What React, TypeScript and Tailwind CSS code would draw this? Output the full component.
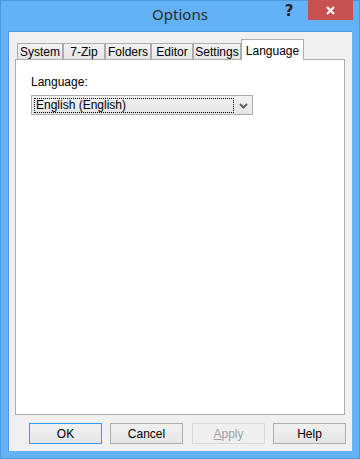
import React from "react";

const tabs = [
  { label: "System", w: "w-[46px]" },
  { label: "7-Zip", w: "w-[42px]" },
  { label: "Folders", w: "w-[46px]" },
  { label: "Editor", w: "w-[42px]" },
  { label: "Settings", w: "w-[48px]" },
];

function Chevron() {
  return (
    <svg width="9" height="6" viewBox="0 0 9 6">
      <path d="M1 1 L4.5 4.5 L8 1" fill="none" stroke="#5f5f5f" strokeWidth="2" />
    </svg>
  );
}

export default function App() {
  return (
    <div
      className="w-[360px] h-[459px] bg-[#63b1f6] border border-[#4d98dc] flex flex-col text-[12px] text-black"
      style={{ fontFamily: '"Liberation Sans", Arial, sans-serif' }}
    >
      {/* Title bar */}
      <div className="relative h-[30px] shrink-0 flex items-start">
        <div
          className="absolute left-0 right-0 top-[2px] text-center text-[15px] text-[#2b2b2b]"
          style={{ fontFamily: '"Noto Sans", "Open Sans", sans-serif' }}
        >
          Options
        </div>
        <div className="ml-auto flex items-start">
          <div
            className="w-[16px] h-[20px] mr-[11px] flex items-center justify-center text-[15px] font-bold text-[#222]"
            style={{ fontFamily: '"DejaVu Sans", sans-serif' }}
          >
            ?
          </div>
          <div className="w-[45px] h-[20px] -mt-px bg-[#c75050] flex items-center justify-center mr-[6px]">
            <svg width="9" height="9" viewBox="0 0 9 9">
              <path d="M1 1 L8 8 M8 1 L1 8" stroke="#fff" strokeWidth="2" />
            </svg>
          </div>
        </div>
      </div>

      {/* Client area */}
      <div className="mx-[7px] w-[344px] h-[420px] bg-[#f0f0f0] border-l border-t border-[#4d98dc] flex flex-col">
        <div className="pt-[7px] pl-[6px]">
          {/* Tab row */}
          <div className="h-[20px] flex items-end pl-[2px]">
            {tabs.map((t) => (
              <div
                key={t.label}
                className={`${t.w} h-[16px] border border-b-0 border-[#acacac] bg-gradient-to-b from-[#f2f2f2] to-[#e6e6e6] flex items-center justify-center`}
              >
                {t.label}
              </div>
            ))}
            <div className="relative z-10 w-[63px] h-[21px] -mb-px border border-b-0 border-[#acacac] bg-white flex items-start justify-center pt-[2px]">
              Language
            </div>
          </div>

          {/* Panel */}
          <div className="w-[330px] h-[356px] border border-[#acacac] bg-white pl-[15px] pt-[15px]">
            <div className="leading-[14px]">Language:</div>
            <div className="mt-[6px] w-[222px] h-[20px] border border-[#acacac] bg-gradient-to-b from-[#f2f2f2] to-[#e5e5e5] flex items-center">
              <div className="ml-[2px] w-[200px] h-[15px] border border-dotted border-black flex items-center pl-px">
                English (English)
              </div>
              <div className="flex-1 flex items-center justify-center pt-px">
                <Chevron />
              </div>
            </div>
          </div>
        </div>

        {/* Buttons */}
        <div className="mt-[8px] pl-[20px] flex gap-[8px]">
          <div className="w-[73px] h-[21px] border border-[#3399ff] bg-gradient-to-b from-[#f0f0f0] to-[#e5e5e5] flex items-center justify-center">
            OK
          </div>
          <div className="w-[73px] h-[21px] border border-[#acacac] bg-gradient-to-b from-[#f0f0f0] to-[#e5e5e5] flex items-center justify-center">
            Cancel
          </div>
          <div className="ml-px w-[73px] h-[21px] border border-[#d9d9d9] bg-[#efefef] flex items-center justify-center text-[#a0a0a0]">
            <span>
              <span className="underline">A</span>pply
            </span>
          </div>
          <div className="w-[73px] h-[21px] border border-[#acacac] bg-gradient-to-b from-[#f0f0f0] to-[#e5e5e5] flex items-center justify-center">
            Help
          </div>
        </div>
      </div>
    </div>
  );
}
